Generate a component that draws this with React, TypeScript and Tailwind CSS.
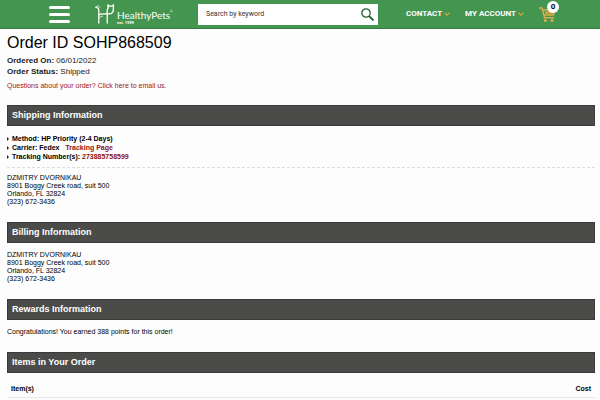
import { useState } from "react";

const ADDRESS = ["DZMITRY DVORNIKAU", "8901 Boggy Creek road, suit 500", "Orlando, FL 32824", "(323) 672-3436"];

function SectionTitle({ children }: { children: string }) {
  return (
    <h2 className="flex h-[21px] items-center border border-[#3a3a3a] bg-[#4b4c4a] px-1 text-[9px] leading-none font-bold text-white">
      {children}
    </h2>
  );
}

function Address() {
  return (
    <address className="not-italic">
      {ADDRESS.map((line) => (
        <p key={line}>{line}</p>
      ))}
    </address>
  );
}

function Chevron() {
  return (
    <svg className="h-1 w-1.5" viewBox="0 0 6 4" fill="none" stroke="#d9a63f" strokeWidth="1.3" aria-hidden="true">
      <path d="M.5.6 3 3.1 5.5.6" />
    </svg>
  );
}

function Logo() {
  return (
    <a href="#" className="ml-[25px] flex w-[77px] items-center text-white" aria-label="HealthyPets">
      <svg className="h-5 w-5 flex-none" viewBox="0 0 20 20" fill="none" stroke="currentColor" strokeWidth="1.3" strokeLinecap="round" strokeLinejoin="round">
        {/* dog forms the h, cat forms the p */}
        <path d="M.8 3.2 2.2 3.6C3.4 4 3.8 5 3.8 6.2V19" />
        <path d="M.8 3.2 2.6 1.8c.8-.2 1.6.4 1.9 1.4" strokeWidth=".8" />
        <path d="M3.8 10.9c1.4-1.2 4.6-.9 8.4-1.1" />
        <path d="M3.8 14.2c1.4-1.4 2.6-1.6 3.8-2" strokeWidth=".8" />
        <path d="M12.2 19V6.6c0-1.2.4-2 1-2.8" />
        <path d="M13.2 3.8 12.8.9l1.9 1.3h1.9L18.6.9l-.3 3.2c.2 1.8 0 3-.7 4.2-.9 1.4-2.8 1.9-5.4 1.5" />
      </svg>
      <span className="ml-0.5 flex flex-col gap-px pt-1.5">
        <span className="flex font-['Lato','Open_Sans',sans-serif] text-[10px] leading-[10px]">
          HealthyPets<sup className="top-0 text-[3px] leading-[4px]">®</sup>
        </span>
        <span className="text-[4px] leading-[4px] font-bold">est. 1999</span>
      </span>
    </a>
  );
}

function Header() {
  const [keyword, setKeyword] = useState("");

  return (
    <header className="flex h-[29px] items-center border-b border-[#347c43] bg-[#43954f] pr-[39px] pl-[49px] font-['Roboto',sans-serif]">
      <button type="button" aria-label="Menu" className="flex w-[21px] flex-none flex-col gap-1">
        <span className="h-[3px] rounded-sm bg-white" />
        <span className="h-[3px] rounded-sm bg-white" />
        <span className="h-[3px] rounded-sm bg-white" />
      </button>
      <Logo />
      <form className="ml-[26px] flex h-[21px] flex-1 items-center bg-white pr-1 pl-2" onSubmit={(e) => e.preventDefault()}>
        <input
          type="text"
          aria-label="Search by keyword"
          placeholder="Search by keyword"
          value={keyword}
          onChange={(e) => setKeyword(e.target.value)}
          className="min-w-0 flex-1 text-[7px] leading-none text-[#333] outline-none placeholder:text-[#333]"
        />
        <button type="submit" aria-label="Search">
          <svg className="h-[13px] w-[13px]" viewBox="0 0 13 13" fill="none" stroke="#245f2a" aria-hidden="true">
            <circle cx="5" cy="5" r="4.2" strokeWidth="1.3" />
            <path d="m8 8 4.5 4.5" strokeWidth="1.8" />
          </svg>
        </button>
      </form>
      <nav className="ml-7 flex items-center gap-[15px] text-[8px] leading-none font-bold text-white">
        <button type="button" className="flex items-center gap-0.5">
          CONTACT <Chevron />
        </button>
        <button type="button" className="flex items-center gap-0.5">
          MY ACCOUNT <Chevron />
        </button>
        <a href="#" aria-label="Cart" className="relative block w-[22px]">
          <svg className="h-[15px] w-[17px]" viewBox="0 0 17 15" fill="none" stroke="#d9b04c" strokeWidth="1.5" aria-hidden="true">
            <path d="M0 1h3l2.6 9.8h9.6" />
            <path d="M3.6 3.1h12.2l-1.3 5H5" />
            <path d="M6 5.6h8.5" stroke="#e8a03c" strokeWidth="2.2" />
            <circle cx="6.3" cy="13.4" r="1.5" fill="#d9b04c" stroke="none" />
            <circle cx="13" cy="13.4" r="1.5" fill="#d9b04c" stroke="none" />
          </svg>
          <span className="absolute -top-1.5 right-0.5 flex h-3 w-3 items-center justify-center rounded-full bg-white text-[8px] font-bold text-black">
            0
          </span>
        </a>
      </nav>
    </header>
  );
}

export default function App() {
  return (
    <div className="min-h-screen bg-[#fdfdfd] font-['Liberation_Sans',Arial,sans-serif] text-[7px] leading-[8px] text-black">
      <Header />
      <main className="pt-1 pr-[5px] pl-[7px]">
        <h1 className="text-[16px] leading-[20px]">Order ID SOHP868509</h1>
        <div className="mt-0.5 text-[8px] leading-[11px] text-[#222]">
          <p>
            <strong>Ordered On:</strong> 06/01/2022
          </p>
          <p>
            <strong>Order Status:</strong> Shipped
          </p>
        </div>
        <a href="#" className="mt-1 block w-fit leading-[10px] text-[#a31515]">
          Questions about your order? Click here to email us.
        </a>

        <section className="mt-[14px]">
          <SectionTitle>Shipping Information</SectionTitle>
          <ul className="border-b border-dashed border-[#ddd] pt-2 pb-1.5 leading-[9px] font-bold">
            {[
              <>Method: HP Priority (2-4 Days)</>,
              <>
                Carrier: Fedex <a href="#" className="ml-1 text-[#8f1414]">Tracking Page</a>
              </>,
              <>
                Tracking Number(s): <a href="#" className="text-[#8f1414]">273885758599</a>
              </>,
            ].map((item, i) => (
              <li key={i} className="flex items-center gap-[3px]">
                <svg className="h-1 w-0.5" viewBox="0 0 2 4" fill="#222" aria-hidden="true">
                  <path d="M0 0 2 2 0 4Z" />
                </svg>
                <span>{item}</span>
              </li>
            ))}
          </ul>
          <div className="pt-1.5">
            <Address />
          </div>
        </section>

        <section className="mt-4">
          <SectionTitle>Billing Information</SectionTitle>
          <div className="pt-2">
            <Address />
          </div>
        </section>

        <section className="mt-4">
          <SectionTitle>Rewards Information</SectionTitle>
          <p className="pt-2">Congratulations! You earned 388 points for this order!</p>
        </section>

        <section className="mt-4">
          <SectionTitle>Items in Your Order</SectionTitle>
          <table className="mt-2 w-full border-b border-[#e8e8e8]">
            <thead>
              <tr>
                <th scope="col" className="px-1 pt-1 pb-1 text-left">Item(s)</th>
                <th scope="col" className="px-1 pt-1 pb-1 text-right">Cost</th>
              </tr>
            </thead>
          </table>
        </section>
      </main>
    </div>
  );
}
